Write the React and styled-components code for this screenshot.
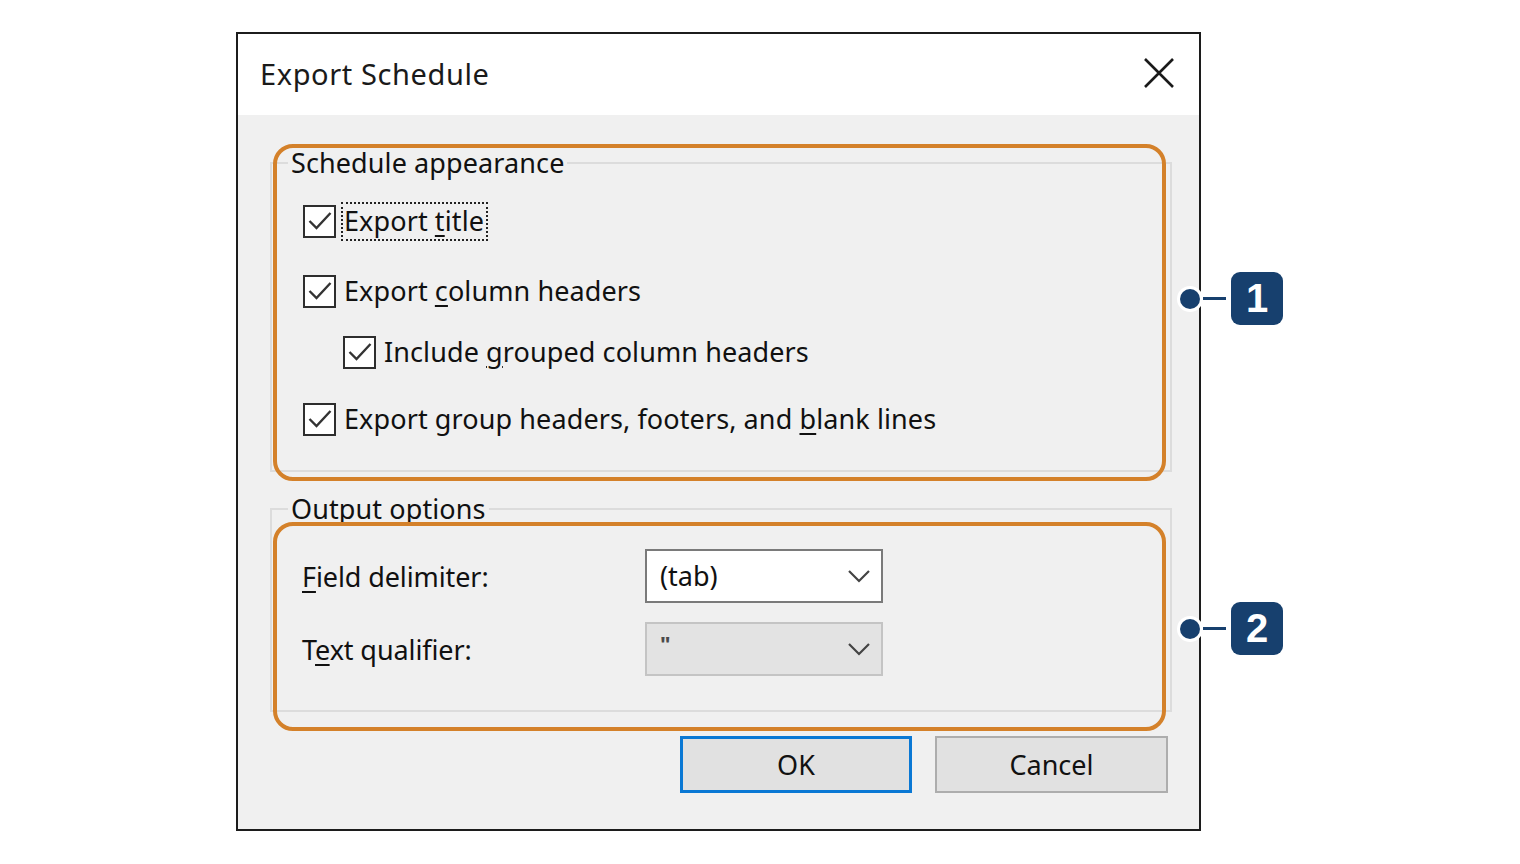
import React from 'react';
import styled, { createGlobalStyle } from 'styled-components';

const GlobalStyle = createGlobalStyle`
  html, body {
    margin: 0;
    padding: 0;
    background: #ffffff;
  }
  body {
    font-family: "Noto Sans", "DejaVu Sans", sans-serif;
    color: #111111;
  }
`;

const Page = styled.div`
  width: 1520px;
  height: 864px;
  padding: 32px 0 0 236px;
  box-sizing: border-box;
`;

const Dialog = styled.div`
  position: relative;
  width: 965px;
  height: 799px;
  box-sizing: border-box;
  border: 2px solid #1c1c1c;
  display: flex;
  flex-direction: column;
  background: #f0f0f0;
`;

const TitleBar = styled.div`
  height: 81px;
  background: #ffffff;
  display: flex;
  align-items: center;
  justify-content: space-between;
  padding: 0 24px 0 22px;
  flex-shrink: 0;
`;

const Title = styled.span`
  font-size: 29px;
  letter-spacing: 0.6px;
  color: #1a1a1a;
  margin-top: -3px;
`;

const CloseButton = styled.button`
  border: 0;
  background: none;
  padding: 0;
  width: 32px;
  height: 32px;
  display: flex;
  margin-top: -4px;
`;

const Body = styled.div`
  flex: 1;
  display: flex;
  flex-direction: column;
  padding: 32px 27px 0 32px;
`;

const GroupBox = styled.fieldset`
  position: relative;
  margin: ${(p) => p.$mt || 0}px 0 0 0;
  padding: 0;
  border: 2px solid #dcdcdc;
  min-width: 0;
`;

const Legend = styled.legend`
  margin-left: 16px;
  padding: 0 3px;
  font-size: 27px;
  line-height: 32px;
  letter-spacing: 0.1px;
`;

/* orange annotation frame drawn over a group box */
const Highlight = styled.div`
  position: absolute;
  left: 1px;
  right: 4px;
  top: ${(p) => p.$top}px;
  bottom: ${(p) => p.$bottom}px;
  border: 4px solid #d4812a;
  border-radius: 20px;
  pointer-events: none;
`;

const GroupContent = styled.div`
  display: flex;
  flex-direction: column;
  padding: ${(p) => p.$pad};
`;

const CheckRow = styled.label`
  display: flex;
  align-items: center;
  height: 40px;
  margin-top: ${(p) => p.$mt || 0}px;
  padding-left: ${(p) => p.$indent}px;
  font-size: 27px;
  letter-spacing: 0.1px;
`;

const Box = styled.span`
  width: 33px;
  height: 33px;
  box-sizing: border-box;
  border: 2px solid #2e2e2e;
  background: #ffffff;
  display: flex;
  align-items: center;
  justify-content: center;
  margin-right: 9px;
  flex-shrink: 0;
`;

const LabelText = styled.span`
  padding: 1px 3px 2px 2px;
  margin-left: -3px;
  outline: ${(p) => (p.$focused ? '2px dotted #222' : 'none')};
  outline-offset: -1px;
  line-height: 34px;
`;

const Key = styled.span`
  text-decoration: underline;
  text-underline-offset: 4px;
  text-decoration-thickness: 2px;
`;

const FieldRow = styled.div`
  display: flex;
  align-items: center;
  margin-top: ${(p) => p.$mt || 0}px;
`;

const FieldLabel = styled.span`
  width: 343px;
  font-size: 27px;
  letter-spacing: -0.1px;
`;

const Combo = styled.div`
  width: 238px;
  height: 54px;
  box-sizing: border-box;
  border: 2px solid ${(p) => (p.$disabled ? '#c4c4c4' : '#7a7a7a')};
  background: ${(p) => (p.$disabled ? '#e3e3e3' : '#ffffff')};
  display: flex;
  align-items: ${(p) => (p.$disabled ? 'flex-start' : 'center')};
  justify-content: space-between;
  padding: 0 10px 0 13px;
  font-size: 27px;
`;

const ComboValue = styled.span`
  margin-top: ${(p) => (p.$disabled ? '4px' : '-2px')};
  font-size: ${(p) => (p.$disabled ? '22px' : '27px')};
  font-weight: ${(p) => (p.$disabled ? 700 : 400)};
  color: ${(p) => (p.$disabled ? '#4a4a4a' : '#111111')};
`;

const Chevron = styled.svg`
  align-self: center;
  flex-shrink: 0;
`;

const ButtonRow = styled.div`
  display: flex;
  justify-content: flex-end;
  gap: 23px;
  margin-top: 24px;
  padding-right: 4px;
`;

const Button = styled.button`
  width: ${(p) => p.$w}px;
  height: 57px;
  box-sizing: border-box;
  background: #e1e1e1;
  border: ${(p) => (p.$primary ? '3px solid #0a78d4' : '2px solid #adadad')};
  font-family: "Noto Sans", "DejaVu Sans", sans-serif;
  font-size: 27px;
  color: #111111;
  padding: 0;
`;

/* numbered marker pointing at a group */
const Callout = styled.div`
  position: absolute;
  left: 942px;
  top: ${(p) => p.$top}px;
  display: flex;
  align-items: center;
`;

const Dot = styled.span`
  width: 20px;
  height: 20px;
  border-radius: 50%;
  background: #17406e;
  box-shadow: 0 0 0 3px #ffffff;
`;

const Leader = styled.span`
  width: 23px;
  height: 3px;
  background: #17406e;
  margin-left: 3px;
  margin-right: 5px;
`;

const Badge = styled.span`
  width: 52px;
  height: 53px;
  border-radius: 9px;
  background: #17406e;
  color: #ffffff;
  display: flex;
  align-items: center;
  justify-content: center;
  font-family: "Liberation Sans", Arial, sans-serif;
  font-weight: 700;
  font-size: 40px;
`;

function Check({ indent, mt, focused, children }) {
  return (
    <CheckRow $indent={indent} $mt={mt}>
      <Box>
        <svg width="26" height="22" viewBox="0 0 26 22">
          <path d="M2.5 11 L9.5 18 L23.5 3" fill="none" stroke="#333" strokeWidth="2.4" />
        </svg>
      </Box>
      <LabelText $focused={focused}>{children}</LabelText>
    </CheckRow>
  );
}

function ChevronDown() {
  return (
    <Chevron width="24" height="14" viewBox="0 0 24 14">
      <path d="M2 2 L12 12 L22 2" fill="none" stroke="#444" strokeWidth="2.2" />
    </Chevron>
  );
}

export default function App() {
  return (
    <Page>
      <GlobalStyle />
      <Dialog>
        <TitleBar>
          <Title>Export Schedule</Title>
          <CloseButton aria-label="Close">
            <svg width="32" height="32" viewBox="0 0 32 32">
              <path d="M2 2 L30 30 M30 2 L2 30" stroke="#1a1a1a" strokeWidth="2.6" />
            </svg>
          </CloseButton>
        </TitleBar>

        <Body>
          <GroupBox>
            <Legend>Schedule appearance</Legend>
            <GroupContent $pad="22px 0 31px 0">
              <Check indent={31} focused>
                Export <Key>t</Key>itle
              </Check>
              <Check indent={31} mt={30}>
                Export <Key>c</Key>olumn headers
              </Check>
              <Check indent={71} mt={21}>
                Include <Key>g</Key>rouped column headers
              </Check>
              <Check indent={31} mt={27}>
                Export group headers, footers, and <Key>b</Key>lank lines
              </Check>
            </GroupContent>
            <Highlight $top={-35} $bottom={-11} />
          </GroupBox>

          <GroupBox $mt={21}>
            <Legend>Output options</Legend>
            <GroupContent $pad="24px 0 34px 30px">
              <FieldRow>
                <FieldLabel>
                  <Key>F</Key>ield delimiter:
                </FieldLabel>
                <Combo>
                  <ComboValue>(tab)</ComboValue>
                  <ChevronDown />
                </Combo>
              </FieldRow>
              <FieldRow $mt={19}>
                <FieldLabel>
                  T<Key>e</Key>xt qualifier:
                </FieldLabel>
                <Combo $disabled>
                  <ComboValue $disabled>"</ComboValue>
                  <ChevronDown />
                </Combo>
              </FieldRow>
            </GroupContent>
            <Highlight $top={-3} $bottom={-21} />
          </GroupBox>

          <ButtonRow>
            <Button $primary $w={232}>OK</Button>
            <Button $w={233}>Cancel</Button>
          </ButtonRow>
        </Body>

        <Callout $top={238}>
          <Dot />
          <Leader />
          <Badge>1</Badge>
        </Callout>
        <Callout $top={568}>
          <Dot />
          <Leader />
          <Badge>2</Badge>
        </Callout>
      </Dialog>
    </Page>
  );
}
